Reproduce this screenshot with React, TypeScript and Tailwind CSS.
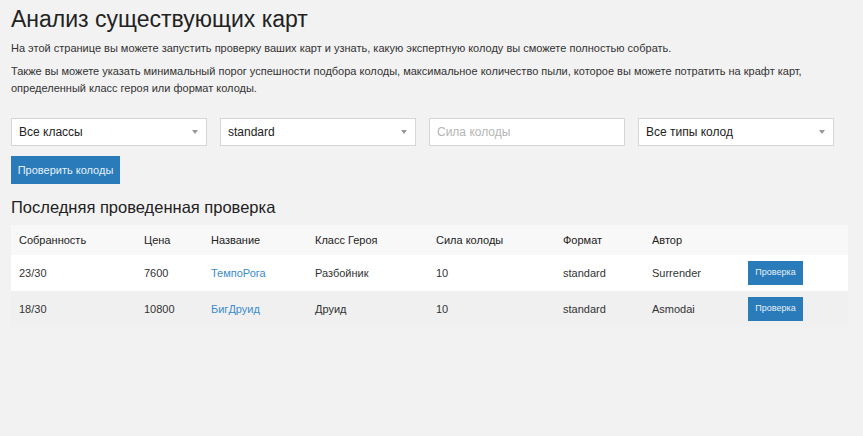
const rows = [
  { done: "23/30", price: "7600", name: "ТемпоРога", hero: "Разбойник", power: "10", format: "standard", author: "Surrender" },
  { done: "18/30", price: "10800", name: "БигДруид", hero: "Друид", power: "10", format: "standard", author: "Asmodai" },
];

const cols = "grid grid-cols-[125px_67px_104px_121px_127px_89px_96px_108px] items-center";

const Select = ({ value }: { value: string }) => (
  <div className="h-[28px] bg-white border border-[#d6d6d6] flex items-center justify-between pl-[7px] pr-[8px] text-[12px] text-[#222]">
    <span>{value}</span>
    <svg width="6" height="4" viewBox="0 0 6 4" className="fill-[#999]">
      <polygon points="0,0 6,0 3,4" />
    </svg>
  </div>
);

export default function App() {
  return (
    <div className="min-h-screen bg-[#f2f2f2] text-[#333] font-['Liberation_Sans',Arial,sans-serif]">
      <div className="pl-[11px] pr-[15px] pt-[4px]">
        <h1 className="text-[23px] leading-[30px] font-light text-[#222]">Анализ существующих карт</h1>
        <p className="mt-[6px] text-[11px] leading-[17px]">
          На этой странице вы можете запустить проверку ваших карт и узнать, какую экспертную колоду вы сможете полностью собрать.
        </p>
        <p className="mt-[6px] text-[11px] leading-[17px] max-w-[810px]">
          Также вы можете указать минимальный порог успешности подбора колоды, максимальное количество пыли, которое вы можете потратить на крафт карт, определенный класс героя или формат колоды.
        </p>

        <div className="mt-[21px] grid grid-cols-[196px_196px_196px_196px] gap-x-[13px]">
          <Select value="Все классы" />
          <Select value="standard" />
          <div className="h-[28px] bg-white border border-[#d6d6d6] flex items-center pl-[7px] text-[12px] text-[#b5b5b5]">
            Сила колоды
          </div>
          <Select value="Все типы колод" />
        </div>

        <button className="mt-[10px] h-[28px] w-[109px] bg-[#2a7bba] text-[#e6f0f8] text-[11px]">
          Проверить колоды
        </button>

        <h2 className="mt-[12px] text-[16.5px] leading-[22px] text-[#222]">Последняя проведенная проверка</h2>

        <div className="mt-[7px] w-[837px] text-[11px]">
          <div className={`${cols} h-[30px] bg-[#f8f8f8] text-[#222]`}>
            {["Собранность", "Цена", "Название", "Класс Героя", "Сила колоды", "Формат", "Автор", ""].map((h, i) => (
              <div key={i} className="pl-[8px]">{h}</div>
            ))}
          </div>
          {rows.map((r, i) => (
            <div key={r.name} className={`${cols} h-[36px] ${i % 2 === 0 ? "bg-white" : "bg-[#f0f0f0]"}`}>
              <div className="pl-[8px]">{r.done}</div>
              <div className="pl-[8px]">{r.price}</div>
              <div className="pl-[8px] text-[#3b8ccc]">{r.name}</div>
              <div className="pl-[8px]">{r.hero}</div>
              <div className="pl-[8px]">{r.power}</div>
              <div className="pl-[8px]">{r.format}</div>
              <div className="pl-[8px]">{r.author}</div>
              <div className="pl-[8px]">
                <button className="h-[24px] w-[55px] bg-[#2a7bba] text-[#e6f0f8] text-[9px]">Проверка</button>
              </div>
            </div>
          ))}
        </div>
      </div>
    </div>
  );
}
